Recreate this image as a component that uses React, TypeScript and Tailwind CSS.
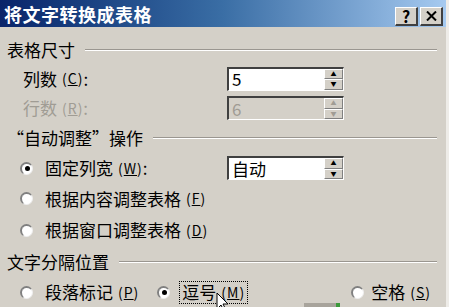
import React from "react";

const font = { fontFamily: '"Noto Sans CJK SC", "Noto Sans", sans-serif' };

const Key = ({ k, gray }: { k: string; gray?: boolean }) => (
  <span className={`text-[14px] ml-[5px] tracking-[1px] ${gray ? "text-[#a09c94]" : ""}`}>
    (<span className="underline">{k}</span>)
  </span>
);

const Header = ({ text, h }: { text: string; h: string }) => (
  <div className={`flex items-center ${h}`}>
    <span className="text-[17px] pl-[7px] whitespace-nowrap">{text}</span>
    <div className="flex-1 ml-[10px] mr-[9px] border-t border-t-[#9a9690] border-b border-b-white" />
  </div>
);

const Radio = ({ on }: { on?: boolean }) => (
  <span className="relative w-[13px] h-[13px] rounded-full bg-white border-t-2 border-l-2 border-t-[#808080] border-l-[#808080] border-b border-r border-b-[#eeeeee] border-r-[#eeeeee] flex items-center justify-center shrink-0">
    {on && <span className="w-[5px] h-[5px] rounded-full bg-black" />}
  </span>
);

const Spin = ({ value, gray }: { value: string; gray?: boolean }) => (
  <div className="ml-auto mr-[102px] w-[117px] h-[24px] flex border-t-2 border-l-2 border-t-[#404040] border-l-[#404040] border-b border-r border-b-white border-r-white bg-white">
    <div
      className={`flex-1 flex items-center pl-[3px] text-[17px] ${
        gray ? "bg-[#d4d0c8] text-[#a09c94]" : "bg-white text-black"
      }`}
    >
      {value}
    </div>
    <div className="w-[19px] flex flex-col bg-[#d4d0c8]">
      <div className="flex-1 flex items-center justify-center border-t border-l border-white border-b border-b-[#808080] border-r border-r-[#808080]">
        <span className={`text-[6px] leading-none ${gray ? "text-[#a09c94]" : "text-black"}`}>▲</span>
      </div>
      <div className="flex-1 flex items-center justify-center border-t border-l border-white border-b border-b-[#808080] border-r border-r-[#808080]">
        <span className={`text-[6px] leading-none ${gray ? "text-[#a09c94]" : "text-black"}`}>▼</span>
      </div>
    </div>
  </div>
);

const TitleBtn = ({ children }: { children: React.ReactNode }) => (
  <div className="w-[23px] h-[19px] bg-[#d4d0c8] border-t border-l border-white border-b-2 border-r-2 border-b-[#404040] border-r-[#404040] flex items-center justify-center text-[16px] font-bold text-black leading-none">
    {children}
  </div>
);

export default function App() {
  return (
    <div
      className="relative w-[449px] h-[307px] overflow-hidden bg-[#d4d0c8] text-black border-r-[3px] border-r-[#eeece8]"
      style={font}
    >
      <div className="h-[27px] flex items-center bg-gradient-to-r from-[#0a246a] via-[#3a6ea5] to-[#a6caf0] pl-[4px] pr-[3px]">
        <span className="text-white font-bold text-[18px] tracking-[0.5px] leading-none">将文字转换成表格</span>
        <div className="ml-auto flex gap-[2px] mt-[5px]">
          <TitleBtn>?</TitleBtn>
          <TitleBtn>
            <svg width="11" height="10" viewBox="0 0 11 10">
              <path d="M1 0.5 L10 9.5 M10 0.5 L1 9.5" stroke="black" strokeWidth="2" />
            </svg>
          </TitleBtn>
        </div>
      </div>

      <div className="pt-[8px]">
        <Header text="表格尺寸" h="h-[29px]" />
        <div className="flex items-center h-[29px] pl-[23px] text-[17px]">
          <span>列数</span>
          <Key k="C" />
          <span>:</span>
          <Spin value="5" />
        </div>
        <div className="flex items-center h-[30px] pl-[23px] text-[17px] text-[#a09c94]">
          <span>行数</span>
          <Key k="R" gray />
          <span>:</span>
          <Spin value="6" gray />
        </div>
        <Header text="“自动调整”操作" h="h-[30px]" />
        <div className="flex items-center h-[30px] pl-[20px] text-[17px]">
          <Radio on />
          <span className="ml-[12px]">固定列宽</span>
          <Key k="W" />
          <span>:</span>
          <Spin value="自动" />
        </div>
        <div className="flex items-center h-[31px] pl-[20px] text-[17px]">
          <Radio />
          <span className="ml-[12px]">根据内容调整表格</span>
          <Key k="F" />
        </div>
        <div className="flex items-center h-[32px] pl-[20px] text-[17px]">
          <Radio />
          <span className="ml-[12px]">根据窗口调整表格</span>
          <Key k="D" />
        </div>
        <Header text="文字分隔位置" h="h-[31px]" />
        <div className="flex items-center h-[30px] pl-[20px] text-[17px]">
          <Radio />
          <span className="ml-[12px]">段落标记</span>
          <Key k="P" />
          <span className="ml-[18px]">
            <Radio on />
          </span>
          <span className="ml-[9px] px-[2px] h-[23px] border border-dotted border-black flex items-center">
            <span>逗号</span>
            <Key k="M" />
          </span>
          <span className="ml-auto">
            <Radio />
          </span>
          <span className="ml-[7px] mr-[15px] flex items-center">
            <span>空格</span>
            <Key k="S" />
          </span>
        </div>
      </div>

      <div className="absolute left-[304px] top-[303px] w-[36px] h-[4px] bg-[#a8a49c]">
        <div className="absolute right-0 top-0 w-[4px] h-[4px] bg-[#3c9a3c]" />
      </div>

      <svg className="absolute left-[216px] top-[292px]" width="14" height="20" viewBox="0 0 14 20">
        <path d="M1 1 L1 17 L5 13 L8 19 L10 18 L7 12 L12 12 Z" fill="white" stroke="black" strokeWidth="1" />
      </svg>
    </div>
  );
}
